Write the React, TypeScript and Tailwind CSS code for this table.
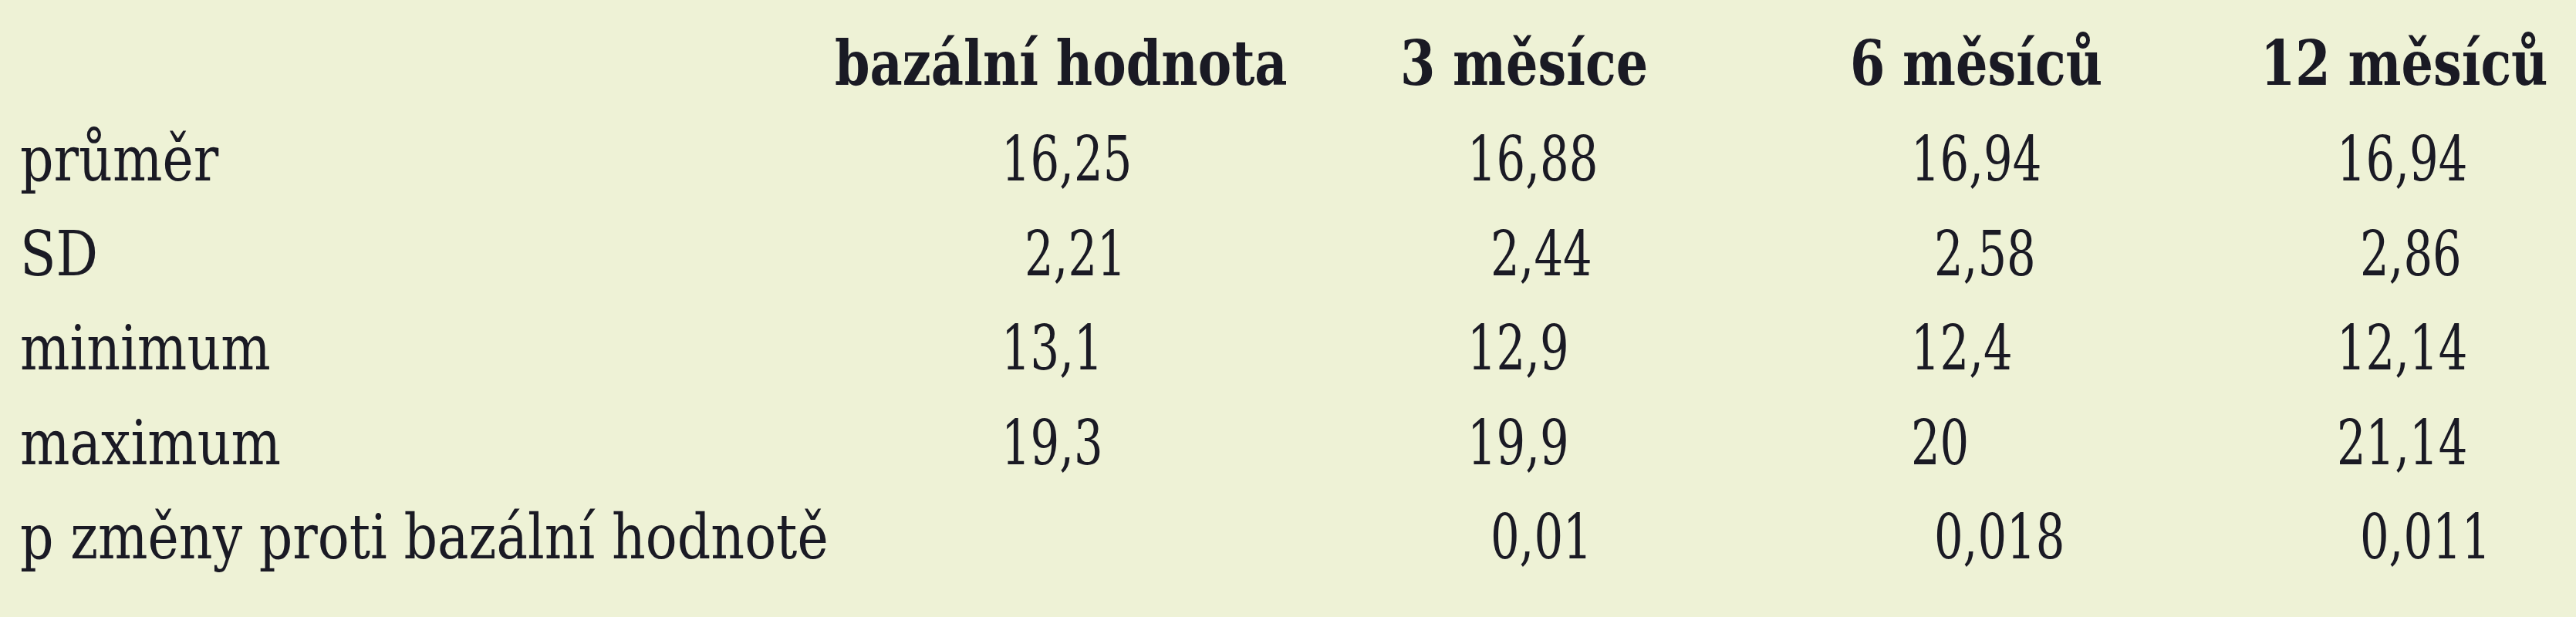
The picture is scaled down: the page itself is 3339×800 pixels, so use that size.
const headers = ["bazální hodnota", "3 měsíce", "6 měsíců", "12 měsíců"]

type Row = { label: string; values: string[] }

const rows: Row[] = [
  { label: "průměr", values: ["16,25", "16,88", "16,94", "16,94"] },
  { label: "SD", values: [" 2,21", " 2,44", " 2,58", " 2,86"] },
  { label: "minimum", values: ["13,1", "12,9", "12,4", "12,14"] },
  { label: "maximum", values: ["19,3", "19,9", "20", "21,14"] },
  { label: "p změny proti bazální hodnotě", values: ["", " 0,01", " 0,018", " 0,011"] },
]

// value offset inside each column (the header starts the column)
const valuePad = ["pl-[216px]", "pl-[87px]", "pl-[79px]", "pl-[99px]"]

function Cell({ text, pad }: { text: string; pad: string }) {
  const indented = text.startsWith(" ")
  return (
    <div className={`${pad} leading-[122.5px]`}>
      <span
        className={`inline-block origin-left scale-x-[0.73] whitespace-nowrap ${indented ? "ml-[30px]" : ""}`}
      >
        {text.trim()}
      </span>
    </div>
  )
}

export default function App() {
  return (
    <div
      className="h-[800px] w-full overflow-hidden bg-[#eef2d6] pl-[26px] pt-[18px] text-[81px] text-[#1a1a24]"
      style={{ fontFamily: '"DejaVu Serif", "Liberation Serif", serif' }}
    >
      <div className="grid grid-cols-[1056px_733px_583px_532px_1fr]">
        {/* header row */}
        <div className="leading-[127px]" />
        {headers.map((h) => (
          <div key={h} className="font-bold leading-[127px]">
            <span className="inline-block origin-left scale-x-[0.805] whitespace-nowrap">{h}</span>
          </div>
        ))}

        {rows.map((r) => (
          <div key={r.label} className="contents">
            <div className="leading-[122.5px]">
              <span className="inline-block origin-left scale-x-[0.84] whitespace-nowrap">{r.label}</span>
            </div>
            {r.values.map((v, i) => (
              <Cell key={i} text={v} pad={valuePad[i]} />
            ))}
          </div>
        ))}
      </div>
    </div>
  )
}
